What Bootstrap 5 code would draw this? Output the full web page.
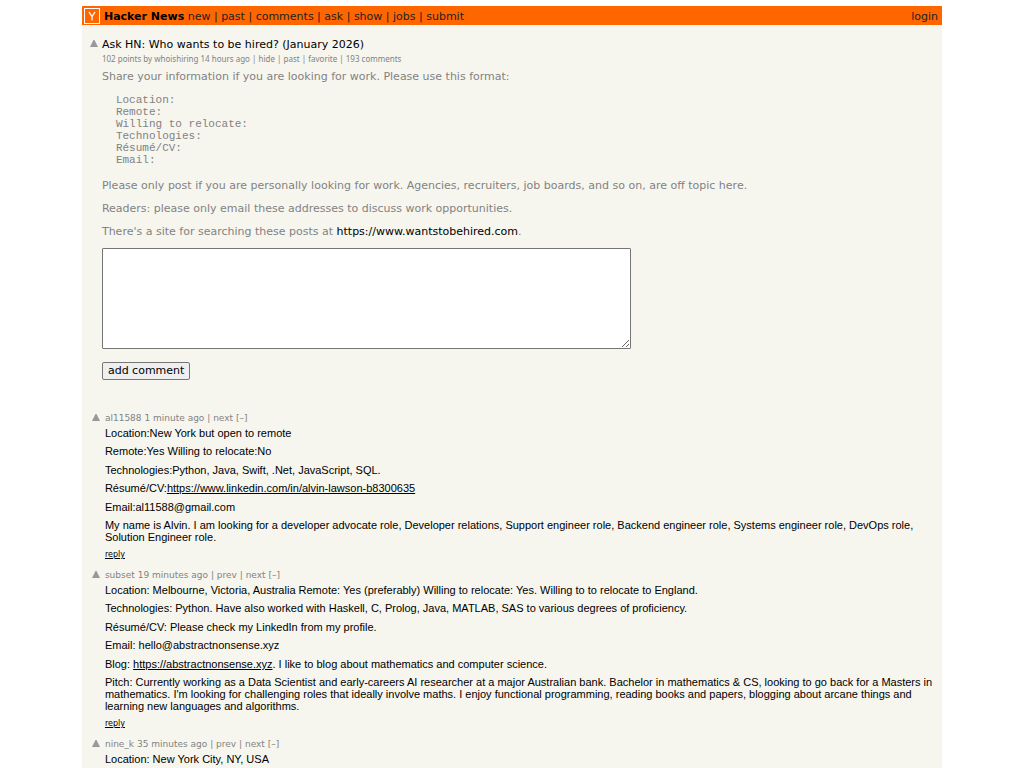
<!DOCTYPE html>
<html lang="en">
<head>
<meta charset="utf-8">
<meta name="viewport" content="width=device-width, initial-scale=1">
<title>Ask HN: Who wants to be hired? (January 2026) | Hacker News</title>
<link href="https://cdn.jsdelivr.net/npm/bootstrap@5.3.0/dist/css/bootstrap.min.css" rel="stylesheet">
<style>
body { font-family: "DejaVu Sans", sans-serif; font-size: 11px; line-height: 12px; color: #000; background: #fff; }
a { color: inherit; text-decoration: none; }
.hn-page { width: 84%; margin-top: 6px; background: #f6f6ef; }
.hn-top { background: #ff6600; font-size: 11px; line-height: 15px; color: #222; padding: 2px 4px 1px 2px; }
.hn-logo { width: 16px; height: 16px; }
.hn-arrow { width: 8px; height: 8px; fill: #999; }
.hn-story { padding: 13px 8px 0; }
.hn-title { line-height: 14px; }
.hn-sub { font-family: "Noto Sans", sans-serif; font-size: 8px; line-height: 14px; color: #828282; margin-bottom: 4px; }
.hn-muted { color: #828282; }
.hn-text { line-height: 13px; }
.hn-text p { margin: 0 0 10px; }
.hn-text pre { font-family: "Liberation Mono", monospace; font-size: 11px; line-height: 12px; margin: 11px 0 13px; padding-left: 14px; overflow: visible; }
.hn-box { display: block; width: 529px; max-width: 100%; height: 101px; border: 1px solid #767676; border-radius: 1px; background: #fff; }
.hn-send { font-size: 11px; line-height: 14px; padding: 1px 5px; border: 1px solid #767676; border-radius: 2px; background: #efefef; color: #000; margin-top: 13px; }
.hn-list { padding: 32px 7px 0 10px; }
.hn-comment { margin-bottom: 8px; gap: 5px; }
.hn-head { font-size: 9px; line-height: 12px; color: #828282; margin-bottom: 3px; }
.hn-body { font-family: "Liberation Sans", sans-serif; font-size: 11px; line-height: 12px; }
.hn-body p { margin: 0 0 6px; }
.hn-body p:nth-child(even):not(:last-child) { margin-bottom: 7px; }
.hn-reply { font-size: 8px; line-height: 12px; }
</style>
</head>
<body>
<div class="hn-page mx-auto min-vh-100">
  <header class="hn-top d-flex align-items-center">
    <a href="#" class="d-flex me-1" aria-label="Home"><svg class="hn-logo" viewBox="0 0 16 16" aria-hidden="true"><rect x=".5" y=".5" width="15" height="15" fill="#ff6600" stroke="#fff"/><path d="M5 4l3 4.600L11 4M8 8.500V12.500" fill="none" stroke="#fff" stroke-width="1.300"/></svg></a>
    <nav><a href="#" class="fw-bold text-black">Hacker News</a> <a href="#">new</a> | <a href="#">past</a> | <a href="#">comments</a> | <a href="#">ask</a> | <a href="#">show</a> | <a href="#">jobs</a> | <a href="#">submit</a></nav>
    <a href="#" class="ms-auto">login</a>
  </header>
  <main>
    <section class="hn-story d-flex gap-1">
      <a href="#" aria-label="upvote"><svg class="hn-arrow" viewBox="0 0 8 8"><path d="M3.500 0H4.500L8 7H0z"/></svg></a>
      <div class="flex-grow-1">
        <div class="hn-title"><a href="#">Ask HN: Who wants to be hired? (January 2026)</a></div>
        <div class="hn-sub">102 points by <a href="#">whoishiring</a> <a href="#">14 hours ago</a> | <a href="#">hide</a> | <a href="#">past</a> | <a href="#">favorite</a> | <a href="#">193 comments</a></div>
        <div class="hn-text hn-muted">
          <p>Share your information if you are looking for work. Please use this format:</p>
<pre>Location:
Remote:
Willing to relocate:
Technologies:
Résumé/CV:
Email:</pre>
          <p>Please only post if you are personally looking for work. Agencies, recruiters, job boards, and so on, are off topic here.</p>
          <p>Readers: please only email these addresses to discuss work opportunities.</p>
          <p>There's a site for searching these posts at <a href="#" class="text-black">https://www.wantstobehired.com</a>.</p>
        </div>
        <form>
          <textarea class="hn-box" aria-label="Comment"></textarea>
          <button type="button" class="hn-send">add comment</button>
        </form>
      </div>
    </section>
    <section class="hn-list">
      <article class="hn-comment d-flex">
        <a href="#" aria-label="upvote"><svg class="hn-arrow" viewBox="0 0 8 8"><path d="M3.500 0H4.500L8 7H0z"/></svg></a>
        <div>
          <div class="hn-head"><a href="#">al11588</a> <a href="#">1 minute ago</a> | <a href="#">next</a> <a href="#">[–]</a></div>
          <div class="hn-body">
            <p>Location:New York but open to remote</p>
            <p>Remote:Yes Willing to relocate:No</p>
            <p>Technologies:Python, Java, Swift, .Net, JavaScript, SQL.</p>
            <p>Résumé/CV:<a href="#" class="text-decoration-underline">https://www.linkedin.com/in/alvin-lawson-b8300635</a></p>
            <p>Email:al11588@gmail.com</p>
            <p>My name is Alvin. I am looking for a developer advocate role, Developer relations, Support engineer role, Backend engineer role, Systems engineer role, DevOps role, Solution Engineer role.</p>
          </div>
          <div class="hn-reply"><a href="#" class="text-decoration-underline">reply</a></div>
        </div>
      </article>
      <article class="hn-comment d-flex">
        <a href="#" aria-label="upvote"><svg class="hn-arrow" viewBox="0 0 8 8"><path d="M3.500 0H4.500L8 7H0z"/></svg></a>
        <div>
          <div class="hn-head"><a href="#">subset</a> <a href="#">19 minutes ago</a> | <a href="#">prev</a> | <a href="#">next</a> <a href="#">[–]</a></div>
          <div class="hn-body">
            <p>Location: Melbourne, Victoria, Australia Remote: Yes (preferably) Willing to relocate: Yes. Willing to to relocate to England.</p>
            <p>Technologies: Python. Have also worked with Haskell, C, Prolog, Java, MATLAB, SAS to various degrees of proficiency.</p>
            <p>Résumé/CV: Please check my LinkedIn from my profile.</p>
            <p>Email: hello@abstractnonsense.xyz</p>
            <p>Blog: <a href="#" class="text-decoration-underline">https://abstractnonsense.xyz</a>. I like to blog about mathematics and computer science.</p>
            <p>Pitch: Currently working as a Data Scientist and early-careers AI researcher at a major Australian bank. Bachelor in mathematics &amp; CS, looking to go back for a Masters in mathematics. I'm looking for challenging roles that ideally involve maths. I enjoy functional programming, reading books and papers, blogging about arcane things and learning new languages and algorithms.</p>
          </div>
          <div class="hn-reply"><a href="#" class="text-decoration-underline">reply</a></div>
        </div>
      </article>
      <article class="hn-comment d-flex">
        <a href="#" aria-label="upvote"><svg class="hn-arrow" viewBox="0 0 8 8"><path d="M3.500 0H4.500L8 7H0z"/></svg></a>
        <div>
          <div class="hn-head"><a href="#">nine_k</a> <a href="#">35 minutes ago</a> | <a href="#">prev</a> | <a href="#">next</a> <a href="#">[–]</a></div>
          <div class="hn-body">
            <p>Location: New York City, NY, USA</p>
          </div>
        </div>
      </article>
    </section>
  </main>
</div>
<script src="https://cdn.jsdelivr.net/npm/bootstrap@5.3.0/dist/js/bootstrap.bundle.min.js"></script>
</body>
</html>
